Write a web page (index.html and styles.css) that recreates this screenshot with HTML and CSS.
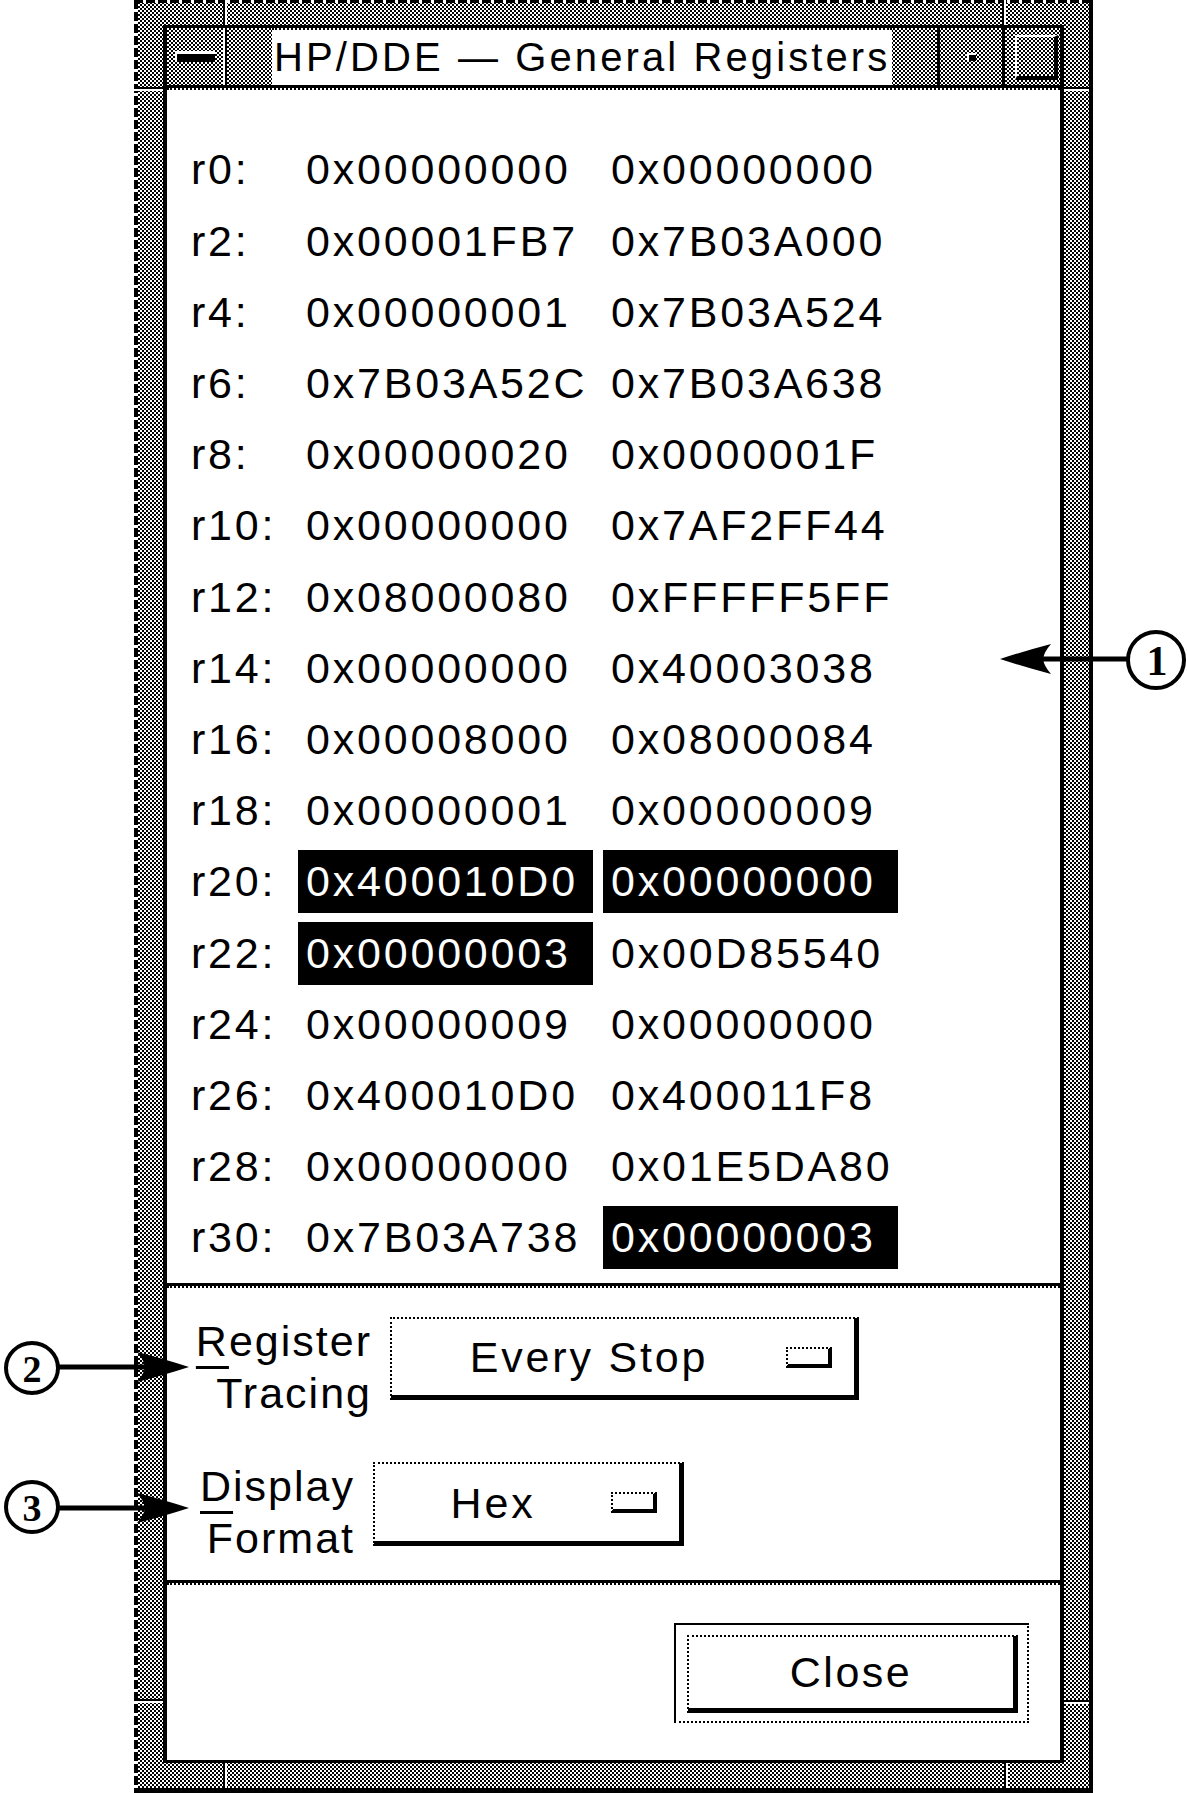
FILE: index.html
```html
<!DOCTYPE html>
<html>
<head>
<meta charset="utf-8">
<title>HP/DDE - General Registers</title>
<link rel="stylesheet" href="styles.css">
</head>
<body>
<div class="window">
  <span class="mark mark-tl-v"></span>
  <span class="mark mark-tr-v"></span>
  <span class="mark mark-bl-v"></span>
  <span class="mark mark-br-v"></span>
  <span class="mark mark-lt-h"></span>
  <span class="mark mark-lb-h"></span>
  <span class="mark mark-rt-h"></span>
  <span class="mark mark-rb-h"></span>
  <div class="inner">
    <div class="titlebar">
      <div class="tb-menu"><span class="menu-bar"></span></div>
      <div class="tb-split"></div>
      <div class="tb-fill"></div>
      <div class="tb-title">HP/DDE — General Registers</div>
      <div class="tb-fill"></div>
      <div class="tb-line"></div>
      <div class="tb-min"><span class="min-dot"></span></div>
      <div class="tb-line"></div>
      <div class="tb-max"><span class="max-box"></span></div>
    </div>
    <div class="title-rule"></div>
    <div class="content">
      <div class="regs">
        <div class="rl">r0:</div><div class="rv">0x00000000</div><div class="rv">0x00000000</div>
        <div class="rl">r2:</div><div class="rv">0x00001FB7</div><div class="rv">0x7B03A000</div>
        <div class="rl">r4:</div><div class="rv">0x00000001</div><div class="rv">0x7B03A524</div>
        <div class="rl">r6:</div><div class="rv">0x7B03A52C</div><div class="rv">0x7B03A638</div>
        <div class="rl">r8:</div><div class="rv">0x00000020</div><div class="rv">0x0000001F</div>
        <div class="rl">r10:</div><div class="rv">0x00000000</div><div class="rv">0x7AF2FF44</div>
        <div class="rl">r12:</div><div class="rv">0x08000080</div><div class="rv">0xFFFFF5FF</div>
        <div class="rl">r14:</div><div class="rv">0x00000000</div><div class="rv">0x40003038</div>
        <div class="rl">r16:</div><div class="rv">0x00008000</div><div class="rv">0x08000084</div>
        <div class="rl">r18:</div><div class="rv">0x00000001</div><div class="rv">0x00000009</div>
        <div class="rl">r20:</div><div class="rv sel">0x400010D0</div><div class="rv sel">0x00000000</div>
        <div class="rl">r22:</div><div class="rv sel">0x00000003</div><div class="rv">0x00D85540</div>
        <div class="rl">r24:</div><div class="rv">0x00000009</div><div class="rv">0x00000000</div>
        <div class="rl">r26:</div><div class="rv">0x400010D0</div><div class="rv">0x400011F8</div>
        <div class="rl">r28:</div><div class="rv">0x00000000</div><div class="rv">0x01E5DA80</div>
        <div class="rl">r30:</div><div class="rv">0x7B03A738</div><div class="rv sel">0x00000003</div>
      </div>
      <div class="sep"></div>
      <div class="options">
        <div class="opt-row">
          <div class="opt-label lbl-reg"><span class="mn">R</span>egister<br>Tracing</div>
          <div class="optmenu om-wide"><span class="om-text">Every Stop</span><span class="om-ind"></span></div>
        </div>
        <div class="opt-row row2">
          <div class="opt-label lbl-disp"><span class="mn">D</span>isplay<br>Format</div>
          <div class="optmenu om-narrow"><span class="om-text">Hex</span><span class="om-ind"></span></div>
        </div>
      </div>
      <div class="sep"></div>
      <div class="actions">
        <div class="default-frame"><div class="btn">Close</div></div>
      </div>
    </div>
  </div>
</div>
<svg class="callouts" viewBox="0 0 1187 1793" width="1187" height="1793" xmlns="http://www.w3.org/2000/svg">
  <g fill="#fff" stroke="#000" stroke-width="4">
    <circle cx="1156" cy="660" r="28"/>
    <ellipse cx="32" cy="1368" rx="26" ry="25"/>
    <ellipse cx="32" cy="1507" rx="26" ry="25"/>
  </g>
  <g stroke="#000" stroke-width="5">
    <line x1="1128" y1="659" x2="1040" y2="659"/>
    <line x1="58" y1="1367" x2="148" y2="1367"/>
    <line x1="58" y1="1508" x2="148" y2="1508"/>
  </g>
  <g fill="#000">
    <path d="M1000 659 Q1028 650 1051 644 Q1044 652 1043 659 Q1044 666 1051 674 Q1028 668 1000 659Z"/>
    <path d="M189 1367 Q161 1358 137 1352 Q144 1360 145 1367 Q144 1374 137 1382 Q161 1376 189 1367Z"/>
    <path d="M189 1508 Q161 1499 137 1493 Q144 1501 145 1508 Q144 1515 137 1523 Q161 1517 189 1508Z"/>
  </g>
  <g class="cnum" text-anchor="middle">
    <text x="1157" y="675" font-size="42">1</text>
    <text x="32" y="1382" font-size="38">2</text>
    <text x="32" y="1521" font-size="38">3</text>
  </g>
</svg>
</body>
</html>
```
FILE: styles.css
```css
* { box-sizing: border-box; }

html, body {
  margin: 0;
  padding: 0;
  background: #fff;
}

body {
  width: 1187px;
  height: 1793px;
  position: relative;
  overflow: hidden;
  font-family: "Liberation Sans", Arial, sans-serif;
  color: #000;
}

.window {
  position: relative;
  margin-left: 134px;
  width: 959px;
  height: 1793px;
  padding: 25px 25px 25px 29px;
  border-right: 4px solid #000;
  border-bottom: 5px solid #000;
  background:
    repeating-linear-gradient(to bottom, #000 0 9px, #fff 9px 12px) left top / 4px 100% no-repeat,
    repeating-linear-gradient(to right, #000 0 9px, #fff 9px 12px) left top / 100% 3px no-repeat,
    conic-gradient(#000 25%, #fff 0 50%, #000 0 75%, #fff 0) 0 0 / 4px 4px;
  display: flex;
  flex-direction: column;
}

/* resize-handle corner marks on the frame */
.mark {
  position: absolute;
  background: linear-gradient(to right, #000 0 2px, #fff 2px 4px);
}
.mark-tl-v { left: 89px; top: 0; width: 4px; height: 25px; }
.mark-tr-v { left: 868px; top: 0; width: 4px; height: 25px; }
.mark-bl-v { left: 89px; bottom: 0; width: 4px; height: 25px; }
.mark-br-v { left: 870px; bottom: 0; width: 4px; height: 25px; }
.mark-lt-h, .mark-lb-h, .mark-rt-h, .mark-rb-h {
  height: 4px;
  width: 29px;
  background: linear-gradient(to bottom, #000 0 2px, #fff 2px 4px);
}
.mark-lt-h { left: 0; top: 87px; }
.mark-lb-h { left: 0; top: 1699px; }
.mark-rt-h { right: 0; top: 87px; width: 25px; }
.mark-rb-h { right: 0; top: 1700px; width: 25px; }

.inner {
  flex: 1;
  display: flex;
  flex-direction: column;
  border-top: 3px solid #000;
  border-left: 4px solid #000;
  border-right: 4px solid #000;
  border-bottom: 3px solid #000;
}

/* title bar */
.titlebar {
  height: 57px;
  display: flex;
  background: conic-gradient(#000 25%, #fff 0 50%, #000 0 75%, #fff 0) 0 0 / 4px 4px;
}
.tb-menu {
  width: 56px;
  display: flex;
  align-items: center;
  padding-left: 8px;
}
.menu-bar {
  display: block;
  width: 40px;
  height: 11px;
  background: #000;
  border-top: 3px solid #fff;
  border-left: 2px solid #fff;
}
.tb-split {
  width: 4px;
  background: linear-gradient(to right, #fff 0 2px, #000 2px 4px);
}
.tb-fill { width: 45px; }
.tb-title {
  width: 620px;
  background: #fff;
  border-top: 2px dotted #000;
  padding-left: 2px;
  font-size: 40px;
  line-height: 55px;
  letter-spacing: 3.1px;
  white-space: nowrap;
  overflow: hidden;
}
.tb-line { width: 3px; background: #000; }
.tb-min {
  width: 62px;
  display: flex;
  align-items: center;
  justify-content: center;
}
.min-dot {
  display: block;
  width: 9px;
  height: 8px;
  background: #000;
  border-top: 2px solid #fff;
  border-left: 2px solid #fff;
}
.tb-max {
  width: 55px;
  padding-left: 10px;
  padding-top: 7px;
}
.max-box {
  display: block;
  width: 43px;
  height: 45px;
  border-top: 2px solid #fff;
  border-left: 2px solid #fff;
  border-right: 4px solid #000;
  border-bottom: 4px solid #000;
}

.title-rule {
  height: 5px;
  background: #fff;
  border-top: 3px solid #000;
  border-bottom: 2px dotted #000;
}

/* client area */
.content {
  flex: 1;
  background: #fff;
  display: flex;
  flex-direction: column;
}

.regs {
  height: 1193px;
  padding: 44.4px 0 0 24px;
  display: grid;
  grid-template-columns: 97px 295px 295px;
  grid-auto-rows: 71.2px;
  column-gap: 10px;
  align-content: start;
  align-items: center;
  font-size: 43px;
  letter-spacing: 2.8px;
  white-space: nowrap;
}
.rl, .rv {
  height: 63px;
  line-height: 63px;
}
.rv { padding-left: 8px; }
.rv.sel { background: #000; color: #fff; }

.sep {
  height: 5px;
  border-top: 3px solid #000;
  border-bottom: 2px dotted #000;
}

.options {
  height: 292px;
  padding: 29px 0 0 27px;
  display: flex;
  flex-direction: column;
  gap: 62px;
}
.opt-row {
  height: 83px;
  display: flex;
  align-items: flex-start;
  gap: 18px;
}
.opt-row.row2 { height: 84px; }
.opt-label {
  margin-top: -2px;
  font-size: 43px;
  line-height: 52px;
  letter-spacing: 2px;
  text-align: right;
  white-space: nowrap;
}
.lbl-reg { width: 178px; }
.lbl-disp { width: 161px; }
.mn {
  text-decoration: underline;
  text-decoration-thickness: 3px;
  text-underline-offset: 10px;
}

.optmenu {
  height: 100%;
  display: flex;
  align-items: center;
  border-top: 2px dotted #000;
  border-left: 2px dotted #000;
  border-right: 5px solid #000;
  border-bottom: 5px solid #000;
  font-size: 43px;
  letter-spacing: 2.8px;
  white-space: nowrap;
}
.om-wide { width: 469px; }
.om-narrow { width: 311px; }
.om-text {
  flex: 1;
  text-align: center;
  line-height: 48px;
}
.om-ind {
  width: 46px;
  height: 21px;
  margin-right: 22px;
  border-top: 2px dotted #000;
  border-left: 2px dotted #000;
  border-right: 4px solid #000;
  border-bottom: 4px solid #000;
}

.actions {
  flex: 1;
  display: flex;
  justify-content: flex-end;
  align-items: flex-start;
  padding: 38px 31px 0 0;
}
.default-frame {
  width: 355px;
  height: 100px;
  padding: 10px 9px 8px 11px;
  border-top: 2px solid #000;
  border-left: 2px solid #000;
  border-right: 2px dotted #000;
  border-bottom: 2px dotted #000;
  display: flex;
}
.btn {
  flex: 1;
  display: flex;
  align-items: center;
  justify-content: center;
  border-top: 2px dotted #000;
  border-left: 2px dotted #000;
  border-right: 5px solid #000;
  border-bottom: 5px solid #000;
  font-size: 43px;
  letter-spacing: 2.5px;
}

/* annotation callouts drawn over the screenshot */
.callouts {
  position: absolute;
  left: 0;
  top: 0;
  pointer-events: none;
}
.cnum {
  font-family: "Liberation Serif", "Times New Roman", serif;
  font-weight: bold;
}
```
